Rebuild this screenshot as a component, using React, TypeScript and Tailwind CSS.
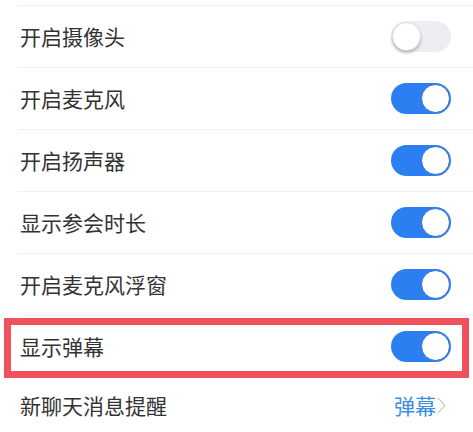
import { useState } from 'react';

type Item = { label: string; on: boolean; highlight?: boolean };

const initialItems: Item[] = [
  { label: '开启摄像头', on: false },
  { label: '开启麦克风', on: true },
  { label: '开启扬声器', on: true },
  { label: '显示参会时长', on: true },
  { label: '开启麦克风浮窗', on: true },
  { label: '显示弹幕', on: true, highlight: true },
];

function Toggle({ on, onClick }: { on: boolean; onClick: () => void }) {
  return (
    <button
      onClick={onClick}
      className={
        on
          ? 'flex h-[31px] w-[60px] items-center justify-end rounded-full bg-[#2b7ff1] px-[1px]'
          : 'flex h-[31px] w-[60px] items-center justify-start rounded-full bg-[#eceef1] px-[1px]'
      }
    >
      <span
        className={
          on
            ? 'h-[29px] w-[29px] rounded-full border-[1.5px] border-[#2a6bd0] bg-white'
            : 'h-[29px] w-[29px] rounded-full border border-[#dcdcdc] bg-white shadow-[0_2px_3px_rgba(0,0,0,0.25)]'
        }
      />
    </button>
  );
}

export default function App() {
  const [items, setItems] = useState(initialItems);

  const flip = (i: number) => {
    setItems(prev => prev.map((it, idx) => (idx === i ? { ...it, on: !it.on } : it)));
  };

  return (
    <div className="h-[432px] w-full overflow-hidden bg-white font-['Noto_Sans_CJK_SC',sans-serif] text-[21px] text-[#333333]">
      <div className="h-[5px]" />
      {items.map((item, i) => (
        <div key={item.label} className="relative h-[62px]">
          <div className="ml-[18px] h-px bg-[#f0f0f0]" />
          <div className="flex h-[61px] items-center justify-between pl-[20px] pr-[22px]">
            <span className="leading-none">{item.label}</span>
            <Toggle on={item.on} onClick={() => flip(i)} />
          </div>
          {item.highlight && (
            <div className="pointer-events-none absolute bottom-[-1px] left-[4px] right-[4px] top-[3px] border-[7px] border-[#f0525b]" />
          )}
        </div>
      ))}
      <div className="h-[62px]">
        <div className="flex h-[56px] items-center justify-between pl-[20px] pr-[27px]">
          <span className="leading-none">新聊天消息提醒</span>
          <span className="flex items-center text-[#3b8ee3] leading-none">
            弹幕
            <svg width="9" height="17" viewBox="0 0 9 17" className="ml-[1px]">
              <path d="M1 1l7 7.5L1 16" fill="none" stroke="#cfcfcf" strokeWidth="1.3" />
            </svg>
          </span>
        </div>
      </div>
    </div>
  );
}
